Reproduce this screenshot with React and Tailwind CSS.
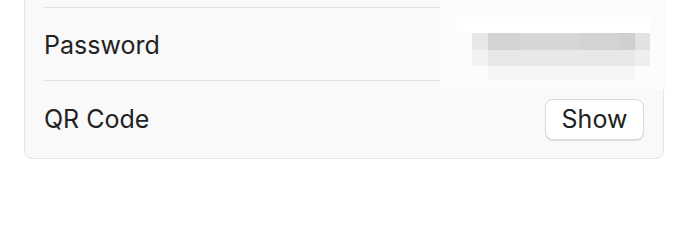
import React from "react";

function Blur() {
  return (
    <svg
      className="absolute left-[415px] top-[-7px]"
      width="226"
      height="89"
      viewBox="0 0 226 89"
    >
      <rect x="0" y="0" width="226" height="89" fill="#fcfcfc" />
      <rect x="17" y="17" width="193" height="16" fill="#ffffff" />
      <rect x="32" y="33" width="16" height="17" fill="#e8e8e8" />
      <rect x="48" y="33" width="147" height="17" fill="#d3d3d3" />
      <rect x="80" y="33" width="60" height="17" fill="#d6d6d6" />
      <rect x="180" y="33" width="15" height="17" fill="#cfcfcf" />
      <rect x="195" y="33" width="15" height="17" fill="#e2e2e2" />
      <rect x="32" y="50" width="16" height="16" fill="#f2f2f2" />
      <rect x="48" y="50" width="147" height="16" fill="#e8e8e8" />
      <rect x="195" y="50" width="15" height="16" fill="#eeeeee" />
      <rect x="48" y="66" width="147" height="14" fill="#f6f6f6" />
    </svg>
  );
}

export default function App() {
  return (
    <div
      className="w-[700px] h-[234px] bg-white overflow-hidden"
      style={{ fontFamily: "Inter, 'Liberation Sans', sans-serif" }}
    >
      <div className="ml-[24px] w-[640px] mt-[-66px] rounded-[8px] border border-[#e5e5e5] bg-[#f9f9f9] text-[#222222] text-[25px]">
        <div className="px-[18px]">
          <div className="h-[72px]"></div>
        </div>
        <div className="relative px-[18px]">
          <div className="h-[73px] border-t border-[#e3e3e3] flex items-center pl-[1px] pt-[3px]">
            Password
          </div>
          <Blur />
        </div>
        <div className="pl-[18px] pr-[19px]">
          <div className="h-[78px] border-t border-[#e3e3e3] flex items-center justify-between">
            <span className="pl-[1px] pt-[1px]">QR Code</span>
            <button className="h-[41px] w-[99px] rounded-[8px] bg-white border border-[#dadada] shadow-[0_1px_1px_rgba(0,0,0,0.12)] text-[25px] text-[#222222] flex items-center justify-center">
              Show
            </button>
          </div>
        </div>
      </div>
    </div>
  );
}
